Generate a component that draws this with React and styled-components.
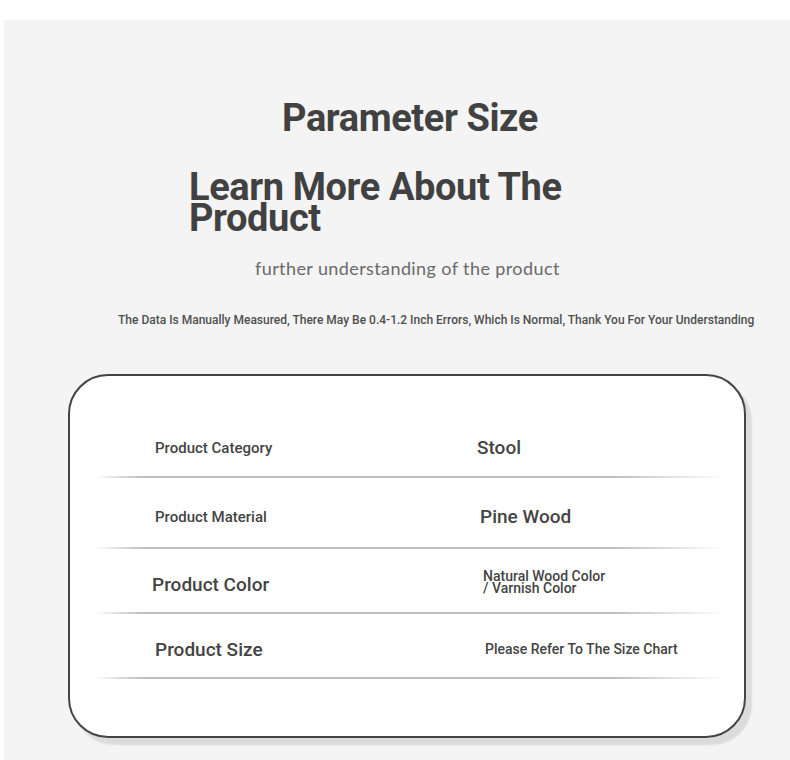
import React from 'react';
import styled, { createGlobalStyle } from 'styled-components';

const GlobalStyle = createGlobalStyle`
    html, body {
        margin: 0;
        padding: 0;
        background: #ffffff;
    }
    body {
        font-family: Roboto, "Liberation Sans", Arial, sans-serif;
        color: #404040;
    }
`

const Page = styled.div`
    width: 790px;
    height: 760px;
    padding-top: 20px;
    box-sizing: border-box;
    overflow: hidden;
`

const Panel = styled.div`
    margin-left: 4px;
    height: 740px;
    background: #f4f4f4;
    padding-top: 79px;
    box-sizing: border-box;
`

const Title = styled.h1`
    margin: 0;
    padding-left: ${p => p.$indent}px;
    font-size: ${p => p.$size}px;
    line-height: ${p => p.$lh}px;
    font-weight: 700;
    color: #414141;
    margin-top: ${p => p.$gap || 0}px;
    letter-spacing: -0.4px;
`

const Subtitle = styled.p`
    margin: 23px 0 0;
    padding-left: 251px;
    font-family: Lato, "Open Sans", sans-serif;
    font-size: 18px;
    line-height: 22px;
    color: #6a6a6a;
    letter-spacing: 0.4px;
`

const Note = styled.p`
    margin: 34px 0 0;
    padding-left: 114px;
    font-size: 12px;
    line-height: 14px;
    font-weight: 500;
    color: #4f4f4f;
    letter-spacing: 0;
`

const Card = styled.div`
    margin: 47px 0 0 64px;
    width: 678px;
    height: 364px;
    box-sizing: border-box;
    background: #fff;
    border: 2px solid #444;
    border-radius: 40px;
    box-shadow: 6px 7px 2px rgba(0, 0, 0, 0.1);
    padding: 35px 21px 0 25px;
`

const Row = styled.div`
    display: grid;
    grid-template-columns: 382px 1fr;
    align-items: center;
    height: ${p => p.$h}px;
    padding-top: 8px;
    box-sizing: border-box;
    border-bottom: 2px solid transparent;
    border-image: linear-gradient(90deg, rgba(190,190,190,0) 0%, #bdbdbd 8%, #bdbdbd 82%, rgba(190,190,190,0) 100%) 1;
`

const Label = styled.span`
    padding-left: ${p => p.$shift}px;
    font-size: ${p => p.$size}px;
    font-weight: 500;
    color: #444;
`

const Value = styled.span`
    padding-left: ${p => p.$shift}px;
    margin-bottom: ${p => p.$lift || 0}px;
    font-size: ${p => p.$size}px;
    line-height: ${p => p.$lh || 'normal'};
    font-weight: 500;
    color: #444;
`

const rows = [
    { h: 67, label: 'Product Category', ls: 60, lsize: 15, value: 'Stool', vs: 0, vsize: 19 },
    { h: 71, label: 'Product Material', ls: 60, lsize: 15, value: 'Pine Wood', vs: 3, vsize: 19 },
    { h: 65, label: 'Product Color', ls: 57, lsize: 19, value: ['Natural Wood Color', '/ Varnish Color'], vs: 6, vsize: 14, vlh: '12px', lift: 5 },
    { h: 65, label: 'Product Size', ls: 60, lsize: 19, value: 'Please Refer To The Size Chart', vs: 8, vsize: 14, lift: 2 },
]

const App = () => {
    return (
        <Page>
            <GlobalStyle/>
            <Panel>
                <Title $indent={278} $size={38} $lh={38}>Parameter Size</Title>
                <Title $indent={185} $size={38} $lh={31} $gap={35}>Learn More About The<br/>Product</Title>
                <Subtitle>further understanding of the product</Subtitle>
                <Note>The Data Is Manually Measured, There May Be 0.4-1.2 Inch Errors, Which Is Normal, Thank You For Your Understanding</Note>
                <Card>
                    {rows.map((r) => (
                        <Row key={r.label} $h={r.h}>
                            <Label $shift={r.ls} $size={r.lsize}>{r.label}</Label>
                            <Value $shift={r.vs} $size={r.vsize} $lh={r.vlh} $lift={r.lift}>
                                {Array.isArray(r.value) ? <>{r.value[0]}<br/>{r.value[1]}</> : r.value}
                            </Value>
                        </Row>
                    ))}
                </Card>
            </Panel>
        </Page>
    )
}

export default App
